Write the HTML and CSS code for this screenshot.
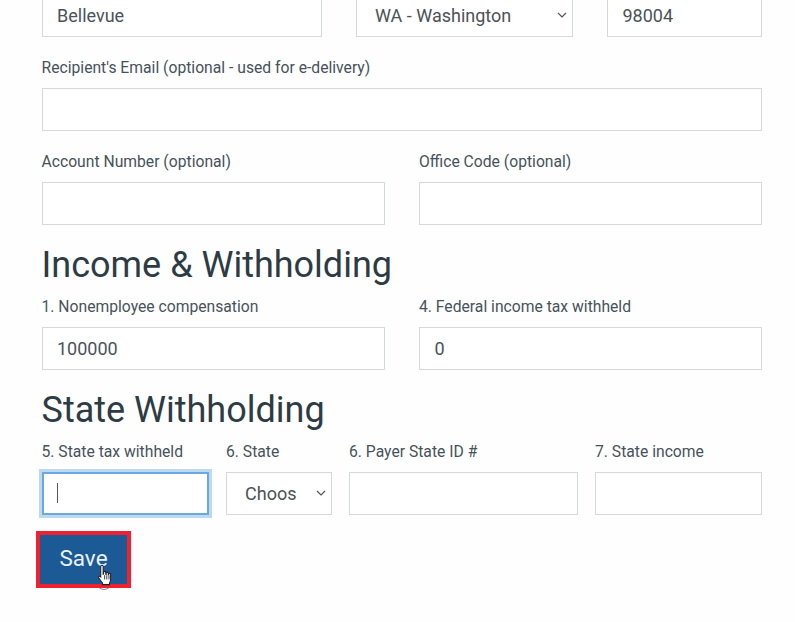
FILE: index.html
```html
<!DOCTYPE html>
<html lang="en">
<head>
<meta charset="utf-8">
<title>Form</title>
<link rel="stylesheet" href="styles.css">
</head>
<body>
<form class="form">
  <div class="row row-city">
    <div class="field"><div class="control">Bellevue</div></div>
    <div class="field"><div class="control select"><span>WA - Washington</span><svg class="chev" viewBox="0 0 10 6"><path d="M1 1l4 4 4-4"/></svg></div></div>
    <div class="field"><div class="control">98004</div></div>
  </div>
  <div class="field field-email">
    <label class="label">Recipient's Email (optional - used for e-delivery)</label>
    <div class="control"></div>
  </div>
  <div class="row row-two row-account">
    <div class="field"><label class="label">Account Number (optional)</label><div class="control"></div></div>
    <div class="field"><label class="label">Office Code (optional)</label><div class="control"></div></div>
  </div>
  <h2 class="heading heading-income">Income &amp; Withholding</h2>
  <div class="row row-two row-income">
    <div class="field"><label class="label">1. Nonemployee compensation</label><div class="control">100000</div></div>
    <div class="field"><label class="label">4. Federal income tax withheld</label><div class="control">0</div></div>
  </div>
  <h2 class="heading heading-state">State Withholding</h2>
  <div class="row row-state">
    <div class="field"><label class="label">5. State tax withheld</label><div class="control focus"><span class="caret"></span></div></div>
    <div class="field"><label class="label">6. State</label><div class="control select"><span>Choos</span><svg class="chev" viewBox="0 0 10 6"><path d="M1 1l4 4 4-4"/></svg></div></div>
    <div class="field"><label class="label">6. Payer State ID #</label><div class="control"></div></div>
    <div class="field"><label class="label">7. State income</label><div class="control"></div></div>
  </div>
  <div class="save-wrap">
    <svg class="ring" viewBox="0 0 16 16"><circle cx="8" cy="8" r="7.5"/></svg>
    <button class="save" type="button">Save</button>
    <svg class="pointer" viewBox="0 0 22 34">
      <path class="hand" d="M5.5 2.2c0-1.6 2.8-1.6 2.8 0v9.3l.5-.2V9.2c0-1.4 2.5-1.4 2.5 0v2.4l.5.1v-1.6c0-1.4 2.4-1.4 2.4 0v2l.5.2v-1c0-1.3 2.2-1.3 2.2 0v6.2c0 2-.7 3-1.3 4.5v1.5H7.6v-1.7c-1-1.6-2.7-3.4-4.3-5.8-1-1.5.6-3 2.2-1.4V2.2z"/>
      <path class="lines" d="M10 12.5v5M12.5 12.5v5M15 13v4.5"/>
    </svg>
  </div>
</form>
</body>
</html>
```
FILE: styles.css
```css
html, body {
  margin: 0;
  height: 622px;
  overflow: hidden;
  background: #fefefe;
}
.form {
  box-sizing: border-box;
  width: 795px;
  padding: 0 33px 0 41.5px;
  margin-top: -6px;
  font-family: Roboto, "Liberation Sans", sans-serif;
  color: #2d3b44;
}
.row { display: grid; }
.row-city { grid-template-columns: 280.5px 217px 155px; column-gap: 34px; }
.row-two { grid-template-columns: 343.5px 343px; column-gap: 34px; }
.row-state { grid-template-columns: 167.5px 106px 229px 167px; column-gap: 17px; }
.field { min-width: 0; }
.field-email { margin-top: 20px; }
.row-account { margin-top: 20px; }
.label {
  display: block;
  height: 20px;
  margin-bottom: 11px;
  font-size: 15.7px;
  line-height: 22px;
  color: #47525a;
}
.control {
  box-sizing: border-box;
  height: 43px;
  padding: 0 14.5px 1px;
  display: flex;
  align-items: center;
  justify-content: space-between;
  border: 1.5px solid #d6d8d9;
  background: #fff;
  font-size: 18px;
  color: #4c5257;
}
.select { padding-left: 18px; padding-right: 5px; }
.chev { width: 10px; height: 6px; flex: none; fill: none; stroke: #555; stroke-width: 1.2; }
.focus {
  border: 2px solid #6aa9dc;
  box-shadow: 0 0 0 3px #bcd9f0;
  justify-content: flex-start;
}
.caret { width: 1px; height: 20px; background: #555; margin-left: -1px; }
.heading {
  margin: 0;
  height: 42px;
  font-size: 36px;
  font-weight: 400;
  line-height: 44px;
  color: #2d3b44;
}
.heading-income { margin-top: 18px; }
.row-income { margin-top: 11px; }
.heading-state { margin-top: 18px; }
.row-state { margin-top: 11px; }
.save-wrap { position: relative; width: 95px; margin: 16px 0 0 -5.5px; }
.save {
  position: relative;
  display: block;
  box-sizing: border-box;
  width: 95px;
  height: 57px;
  border: 4px solid #ee2130;
  outline: none;
  padding: 0 0 3px;
  background: #1c5a96;
  font-family: inherit;
  font-size: 22.5px;
  color: #e9f2f8;
}
.ring { position: absolute; left: 60px; top: 43px; width: 16px; height: 16px; fill: none; stroke: #888; stroke-width: 1; }
.pointer { position: absolute; left: 59.5px; top: 33px; width: 19px; height: 30px; }
.hand { fill: #fff; stroke: #222; stroke-width: 1.2; }
.lines { fill: none; stroke: #222; stroke-width: 1; }
```
